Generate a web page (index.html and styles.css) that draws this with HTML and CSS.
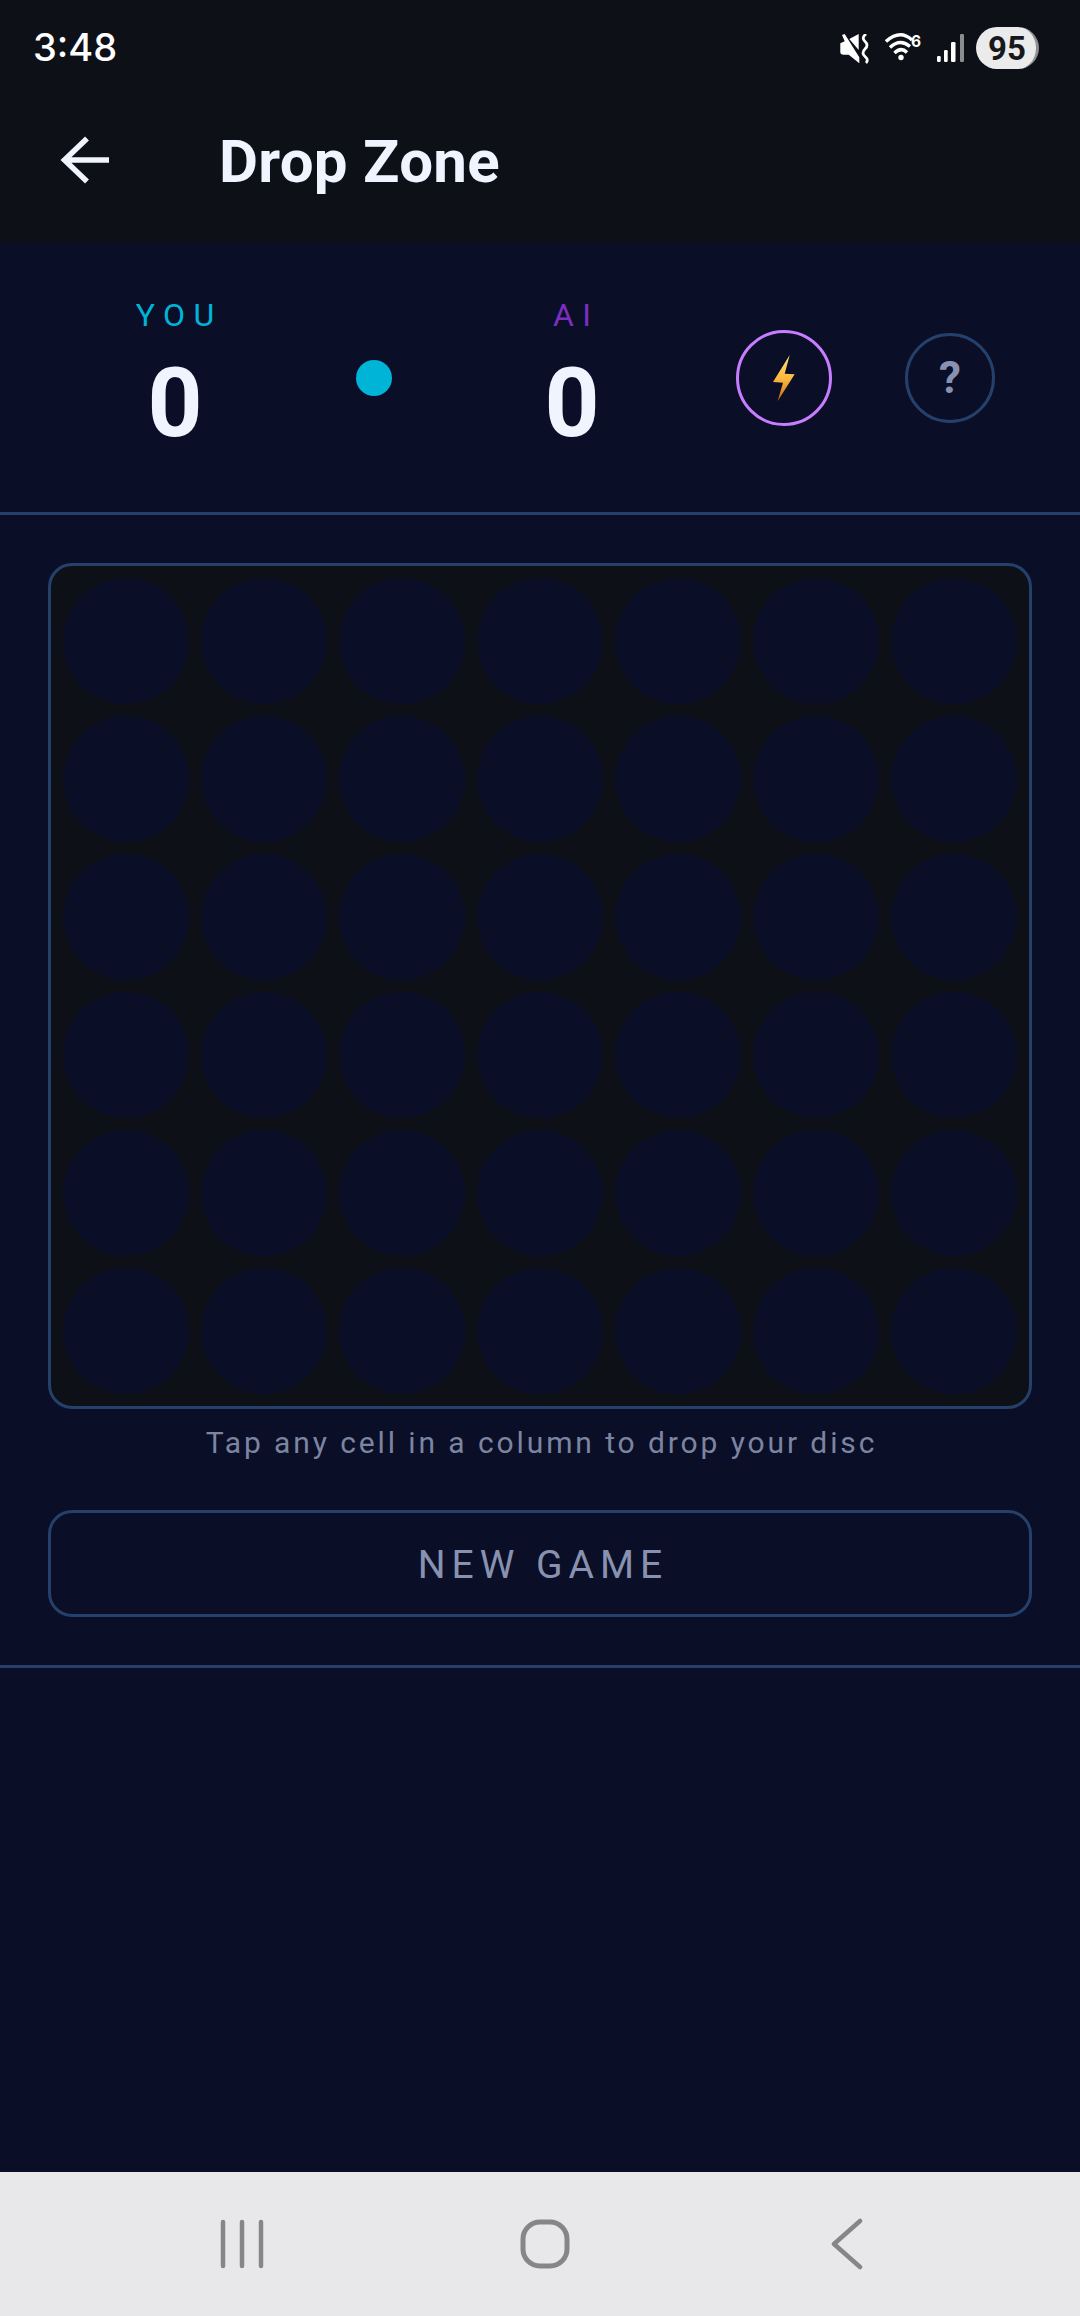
FILE: index.html
```html
<!DOCTYPE html>
<html lang="en">
<head>
<meta charset="utf-8">
<title>Drop Zone</title>
<link rel="stylesheet" href="styles.css">
</head>
<body>
<div class="screen">
  <div class="top">
    <div class="status">
      <span class="time">3:48</span>
      <div class="status-icons">
        <svg class="ic-mute" width="30" height="30" viewBox="0 0 30 30"><path d="M2 1L4.700 0 19.300 23.300V29.300L8.700 20.700H3.700Q.3 20.700 .3 18.300V9.300L4.700 7.300Z" fill="#fff"/><path d="M9.300 5L18.700 0V16Z" fill="#fff"/><path d="M26 0Q21 4 25 7.500T25 15 25 22.500 26 29" fill="none" stroke="#fff" stroke-width="2.800"/></svg>
        <svg class="ic-wifi" width="36" height="28" viewBox="0 0 36 28"><g fill="none" stroke="#fff" stroke-width="3.400"><path d="M1 8.500Q15 -4 27 7"/><path d="M5 14.500Q15 5 25 13.500"/><path d="M9.500 20Q16 13.500 22 19.500"/></g><circle cx="16" cy="24.500" r="2.700" fill="#fff"/><text x="26" y="14" class="wifi-six">6</text></svg>
        <svg class="ic-signal" width="28" height="28" viewBox="0 0 28 28"><g fill="#fff"><rect x="0" y="22" width="3.700" height="6" rx="1.200"/><rect x="7" y="16" width="3.700" height="12" rx="1.200"/><rect x="14" y="8" width="4.500" height="20" rx="1.200"/></g><rect x="23" y="0" width="4" height="28" rx="1" fill="#8a8c8e"/></svg>
        <div class="battery"><span>95</span></div>
      </div>
    </div>
    <div class="appbar">
      <svg class="back" width="50" height="50" viewBox="0 0 50 50"><path d="M49 25H5M27 3.500L4.500 25 27 46.500" fill="none" stroke="#f0f4ff" stroke-width="5.500"/></svg>
      <h1 class="title">Drop Zone</h1>
    </div>
  </div>

  <div class="scoreboard">
    <div class="player">
      <span class="label label-you">YOU</span>
      <span class="score">0</span>
    </div>
    <span class="turn"></span>
    <div class="player">
      <span class="label label-ai">AI</span>
      <span class="score">0</span>
    </div>
    <button class="bolt-btn" type="button">
      <svg width="22" height="46" viewBox="0 0 22 46"><defs><linearGradient id="bolt" x1="0" y1="0" x2="0" y2="1"><stop offset="0" stop-color="#ffe27a"/><stop offset=".5" stop-color="#fdb940"/><stop offset="1" stop-color="#c96a12"/></linearGradient></defs><path d="M16.700 0L0 27 10 27.700 4.700 46 21.700 19.300 11.700 18.700Z" fill="url(#bolt)"/></svg>
    </button>
    <button class="help-btn" type="button">?</button>
  </div>

  <div class="game">
    <div class="board">
      <i class="cell"></i><i class="cell"></i><i class="cell"></i><i class="cell"></i><i class="cell"></i><i class="cell"></i><i class="cell"></i>
      <i class="cell"></i><i class="cell"></i><i class="cell"></i><i class="cell"></i><i class="cell"></i><i class="cell"></i><i class="cell"></i>
      <i class="cell"></i><i class="cell"></i><i class="cell"></i><i class="cell"></i><i class="cell"></i><i class="cell"></i><i class="cell"></i>
      <i class="cell"></i><i class="cell"></i><i class="cell"></i><i class="cell"></i><i class="cell"></i><i class="cell"></i><i class="cell"></i>
      <i class="cell"></i><i class="cell"></i><i class="cell"></i><i class="cell"></i><i class="cell"></i><i class="cell"></i><i class="cell"></i>
      <i class="cell"></i><i class="cell"></i><i class="cell"></i><i class="cell"></i><i class="cell"></i><i class="cell"></i><i class="cell"></i>
    </div>
    <p class="hint">Tap any cell in a column to drop your disc</p>
    <button class="new-game" type="button"><span class="new-game-text">NEW GAME</span></button>
  </div>

  <div class="spacer"></div>

  <nav class="navbar">
    <svg width="48" height="50" viewBox="0 0 48 50"><path d="M5 3V47M24 3V47M43 3V47" stroke="#868686" stroke-width="4.500" stroke-linecap="round" fill="none"/></svg>
    <svg class="nav-home" width="50" height="50" viewBox="0 0 50 50"><rect x="3" y="3" width="44" height="44" rx="17" fill="none" stroke="#868686" stroke-width="5"/></svg>
    <svg width="34" height="52" viewBox="0 0 34 52"><path d="M30 3L4 26 30 49" stroke="#868686" stroke-width="4.500" stroke-linecap="round" stroke-linejoin="round" fill="none"/></svg>
  </nav>
</div>
</body>
</html>
```
FILE: styles.css
```css
* { box-sizing: border-box; }
html, body { margin: 0; padding: 0; }
body { background: #0a0e27; font-family: Roboto, sans-serif; }
.screen { width: 1080px; height: 2316px; display: flex; flex-direction: column; overflow: hidden; background: #0a0e27; }

.top { background: #0d1117; height: 243px; }
.status { height: 90px; display: flex; align-items: center; justify-content: space-between; padding: 4px 41px 0 33px; }
.time { font-family: Inter, Roboto, sans-serif; font-size: 38px; font-weight: 500; color: #fff; line-height: 1; }
.status-icons { display: flex; align-items: center; }
.ic-mute { margin: 4px 15px 0 0; }
.ic-wifi { margin-right: 16px; }
.ic-signal { margin: 2px 11px 0 0; }
.wifi-six { font-family: Inter, sans-serif; font-size: 15.500px; font-weight: 700; fill: #fff; }
.battery { width: 63px; height: 42px; margin-top: 2px; padding-left: 2px; border-radius: 21px; background: #ebebeb; border-right: 3px solid #8f9092; display: flex; align-items: center; justify-content: center; }
.battery span { font-family: Roboto, sans-serif; font-size: 33px; font-weight: 700; color: #16181c; line-height: 1; }

.appbar { display: flex; align-items: center; height: 138px; padding: 2px 0 0 60px; }
.back { margin-right: 109px; flex: none; }
.title { margin: 4px 0 0; font-size: 60px; font-weight: 700; letter-spacing: .3px; color: #f0f4ff; line-height: 1; }

.scoreboard { height: 272px; border-bottom: 3px solid #25406a; display: flex; align-items: center; padding-left: 115px; }
.player { width: 120px; display: flex; flex-direction: column; align-items: center; }
.label { font-size: 32px; line-height: 39px; margin-bottom: 12px; letter-spacing: 8.500px; margin-right: -8.500px; font-weight: 400; }
.label-you { color: #00b4d8; }
.label-ai { color: #7b2fbe; }
.score { font-size: 96px; line-height: 112px; font-weight: 700; color: #f0f4ff; }
.turn { width: 36px; height: 36px; border-radius: 50%; background: #00b4d8; margin: 0 120px 0 121px; }
.bolt-btn, .help-btn { padding: 0; background: transparent; border-radius: 50%; display: flex; align-items: center; justify-content: center; flex: none; }
.bolt-btn { width: 96px; height: 96px; border: 3px solid #c77dff; margin-left: 104px; }
.help-btn { width: 90px; height: 90px; border: 3px solid #25406a; margin-left: 73px; font-family: Roboto, sans-serif; font-size: 44px; font-weight: 700; color: #8892b0; }

.game { padding: 48px; border-bottom: 3px solid #25406a; }
.board { display: grid; grid-template-columns: repeat(7, 126px); grid-auto-rows: 126px; gap: 12px; padding: 12px; border: 3px solid #25406a; border-radius: 24px; background: #0d1117; }
.cell { display: block; border-radius: 50%; background: #0a0e27; }
.hint { margin: 0; height: 101px; padding: 16px 0 0 3px; text-align: center; font-size: 30px; line-height: 36px; letter-spacing: 2.900px; color: #8892b0; opacity: .9; }
.new-game { display: block; width: 100%; height: 107px; padding: 3px 0 0 6px; background: transparent; border: 3px solid #25406a; border-radius: 24px; font-family: Roboto, sans-serif; font-size: 39px; font-weight: 400; letter-spacing: 6px; color: #8892b0; }

.spacer { flex: 1; }
.navbar { height: 144px; background: #e8e8ea; display: flex; align-items: center; padding: 0 216px 0 218px; justify-content: space-between; }
.nav-home { margin-right: 7px; }
```
